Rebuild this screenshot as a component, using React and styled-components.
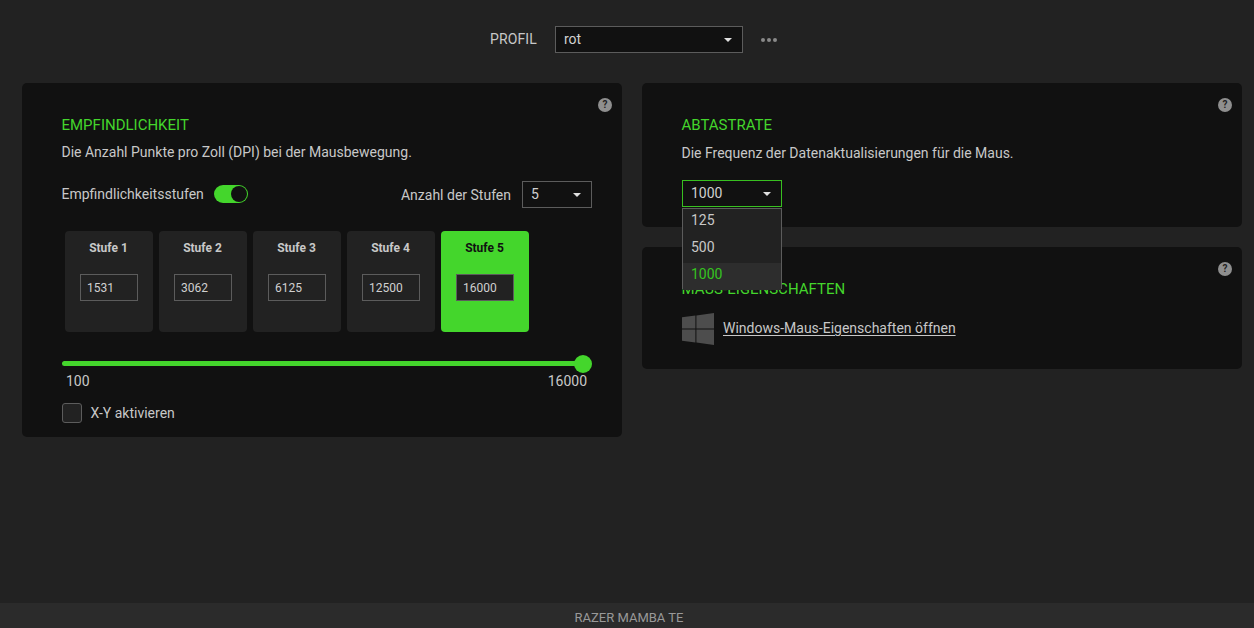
import React from "react";
import styled, { createGlobalStyle } from "styled-components";

const Global = createGlobalStyle`
  html, body { margin: 0; padding: 0; height: 100%; overflow: hidden; background: #222222; }
  #root { height: 628px; }
  * { box-sizing: border-box; }
`;

const green = "#44d62c";
const Page = styled.div`
  width: 1254px; height: 628px; display: flex; flex-direction: column;
  background: #222222; color: #c8c8c8; font-family: Roboto, "Liberation Sans", sans-serif; font-size: 14px;
`;
const TopBar = styled.header`
  height: 83px; flex: none; display: flex; align-items: flex-start; justify-content: center;
  padding: 26px 0 0 13px;
`;
const ProfileLabel = styled.span`
  font-size: 14px; line-height: 27px; margin-right: 18px; letter-spacing: 0.1px;
`;
const SelectBox = styled.div`
  position: relative; flex: none; display: flex; align-items: center; justify-content: space-between;
  width: ${p => p.$w}px; height: 27px; padding: 0 10px 2px 8px; background: #111111;
  border: 1px solid ${p => p.$active ? "#38c020" : "#5c5c5c"};
  font-size: 14px; color: #d0d0d0;
`;
const Caret = styled.i`
  width: 0; height: 0; border-left: 4.5px solid transparent; border-right: 4.5px solid transparent;
  border-top: 4.5px solid #e0e0e0; margin-top: 2px;
`;
const Dots = styled.div`
  display: flex; gap: 2px; margin: 12px 0 0 18px; height: 4px;
  span { width: 4px; height: 4px; border-radius: 50%; background: #8a8a8a; }
`;
const Main = styled.main`
  flex: 1; display: flex; gap: 20px; align-items: flex-start; padding: 0 12px 0 22px;
`;
const Column = styled.div`
  width: 600px; display: flex; flex-direction: column; gap: 20px;
`;
const Card = styled.section`
  position: relative; width: 600px; height: ${p => p.$h}px; background: #111111; border-radius: 5px;
  padding: 32px 30px 0 40px;
`;
const Help = styled.span`
  position: absolute; top: 15px; right: 10px; width: 14px; height: 14px; border-radius: 50%;
  background: #8f8f8f; color: #222; font-size: 10px; font-weight: 700; line-height: 14px; text-align: center;
`;
const Title = styled.h2`
  margin: 0 0 0 -0.5px; font-family: Roboto, sans-serif; font-weight: 400; font-size: 15px; line-height: 20px; color: ${green};
`;
const Desc = styled.p`
  margin: ${p => p.$mt}px 0 0 -0.5px; font-size: 14px; line-height: 20px; color: #c8c8c8;
`;
const Row = styled.div`
  display: flex; align-items: center; justify-content: space-between; margin-top: ${p => p.$mt}px; height: 27px;
`;
const Inline = styled.div`
  display: flex; align-items: center; gap: ${p => p.$gap}px; margin-top: ${p => p.$mt || 0}px;
`;
const RowLead = styled(Inline)`
  margin-left: -0.5px; padding-bottom: 2px;
`;
const Toggle = styled.div`
  width: 34px; height: 18px; border-radius: 9px; background: ${green}; position: relative;
  &::after { content: ""; position: absolute; right: 1px; top: 1px; width: 16px; height: 16px; border-radius: 50%; background: #111; }
`;
const Stages = styled.div`
  display: flex; gap: 6px; margin: 23px 0 0 3px;
`;
const Stage = styled.div`
  width: 88px; height: 101px; border-radius: 4px; display: flex; flex-direction: column; align-items: center;
  background: ${p => p.$active ? green : "#222222"}; padding-top: 9px;
`;
const StageName = styled.div`
  font-size: 12px; font-weight: 700; line-height: 16px; margin-left: -1px; color: ${p => p.$active ? "#111" : "#c8c8c8"};
`;
const DpiInput = styled.div`
  width: 58px; height: 27px; margin-top: 18px; border: 1px solid #5c5c5c; background: #222222; padding-left: 6px;
  font-size: 12px; line-height: 26px; color: #d0d0d0;
`;
const Slider = styled.div`
  position: relative; height: 5px; margin-top: 29px; border-radius: 3px; background: ${green}; width: 521px;
  &::after { content: ""; position: absolute; right: -9px; top: -6.5px; width: 18px; height: 18px; border-radius: 50%; background: ${green}; }
`;
const Range = styled.div`
  display: flex; justify-content: space-between; width: 525px; padding-left: 4px; margin-top: 7px; line-height: 16px; font-size: 14px;
`;
const Check = styled.div`
  display: flex; align-items: center; gap: 8.5px; margin-top: 14px;
`;
const Box = styled.span`
  width: 20px; height: 20px; background: #222222; border: 1px solid #5c5c5c; border-radius: 3px;
`;
const Menu = styled.div`
  position: absolute; z-index: 2; left: -1px; top: 27px; width: 100px; height: 81px; background: #222222; border: 1px solid #5c5c5c;
`;
const MenuItem = styled.div`
  height: 27px; line-height: 22px; padding-left: 8px;
  background: ${p => p.$active ? "#2d2d2d" : "transparent"}; color: ${p => p.$active ? "#35c41f" : "#c8c8c8"};
`;
const Link = styled.a`
  color: #c8c8c8; text-decoration: underline; text-underline-offset: 2px; padding-bottom: 2px;
`;
const Footer = styled.footer`
  height: 25px; flex: none; background: #2b2b2b; text-align: center; padding: 5px 0 0 4px;
  font-family: Roboto, sans-serif; font-size: 13px; line-height: 20px; color: #999;
`;

const Win = () => (
  <svg width="32" height="32" viewBox="0 0 32 32" fill="#4d4d4d">
    <path d="M0 4.3 13.4 2.6V15.4H0Z M14.4 2.4 32 0V15.4H14.4Z M0 16.6H13.4V29.4L0 27.7Z M14.4 16.6H32V32L14.4 29.6Z" />
  </svg>
);

export default function App() {
  const stages = [["Stufe 1", "1531"], ["Stufe 2", "3062"], ["Stufe 3", "6125"], ["Stufe 4", "12500"], ["Stufe 5", "16000"]];
  return (
    <Page>
      <Global />
      <TopBar>
        <ProfileLabel>PROFIL</ProfileLabel>
        <SelectBox $w={188}>rot<Caret /></SelectBox>
        <Dots><span /><span /><span /></Dots>
      </TopBar>
      <Main>
        <Column>
          <Card $h={354}>
            <Help>?</Help>
            <Title>EMPFINDLICHKEIT</Title>
            <Desc $mt={7}>Die Anzahl Punkte pro Zoll (DPI) bei der Mausbewegung.</Desc>
            <Row $mt={19}>
              <RowLead $gap={10}>Empfindlichkeitsstufen<Toggle /></RowLead>
              <Inline $gap={11}>Anzahl der Stufen<SelectBox $w={70}>5<Caret /></SelectBox></Inline>
            </Row>
            <Stages>
              {stages.map(([n, v], i) => (
                <Stage key={n} $active={i === 4}>
                  <StageName $active={i === 4}>{n}</StageName>
                  <DpiInput>{v}</DpiInput>
                </Stage>
              ))}
            </Stages>
            <Slider />
            <Range><span>100</span><span>16000</span></Range>
            <Check><Box />X-Y aktivieren</Check>
          </Card>
        </Column>
        <Column>
          <Card $h={144}>
            <Help>?</Help>
            <Title>ABTASTRATE</Title>
            <Desc $mt={8}>Die Frequenz der Datenaktualisierungen für die Maus.</Desc>
            <Row $mt={17}>
              <SelectBox $w={100} $active>
                1000<Caret />
                <Menu>
                  <MenuItem>125</MenuItem>
                  <MenuItem>500</MenuItem>
                  <MenuItem $active>1000</MenuItem>
                </Menu>
              </SelectBox>
            </Row>
          </Card>
          <Card $h={122}>
            <Help>?</Help>
            <Title>MAUS-EIGENSCHAFTEN</Title>
            <Inline $gap={9} $mt={14}>
              <Win />
              <Link>Windows-Maus-Eigenschaften öffnen</Link>
            </Inline>
          </Card>
        </Column>
      </Main>
      <Footer>RAZER MAMBA TE</Footer>
    </Page>
  );
}
